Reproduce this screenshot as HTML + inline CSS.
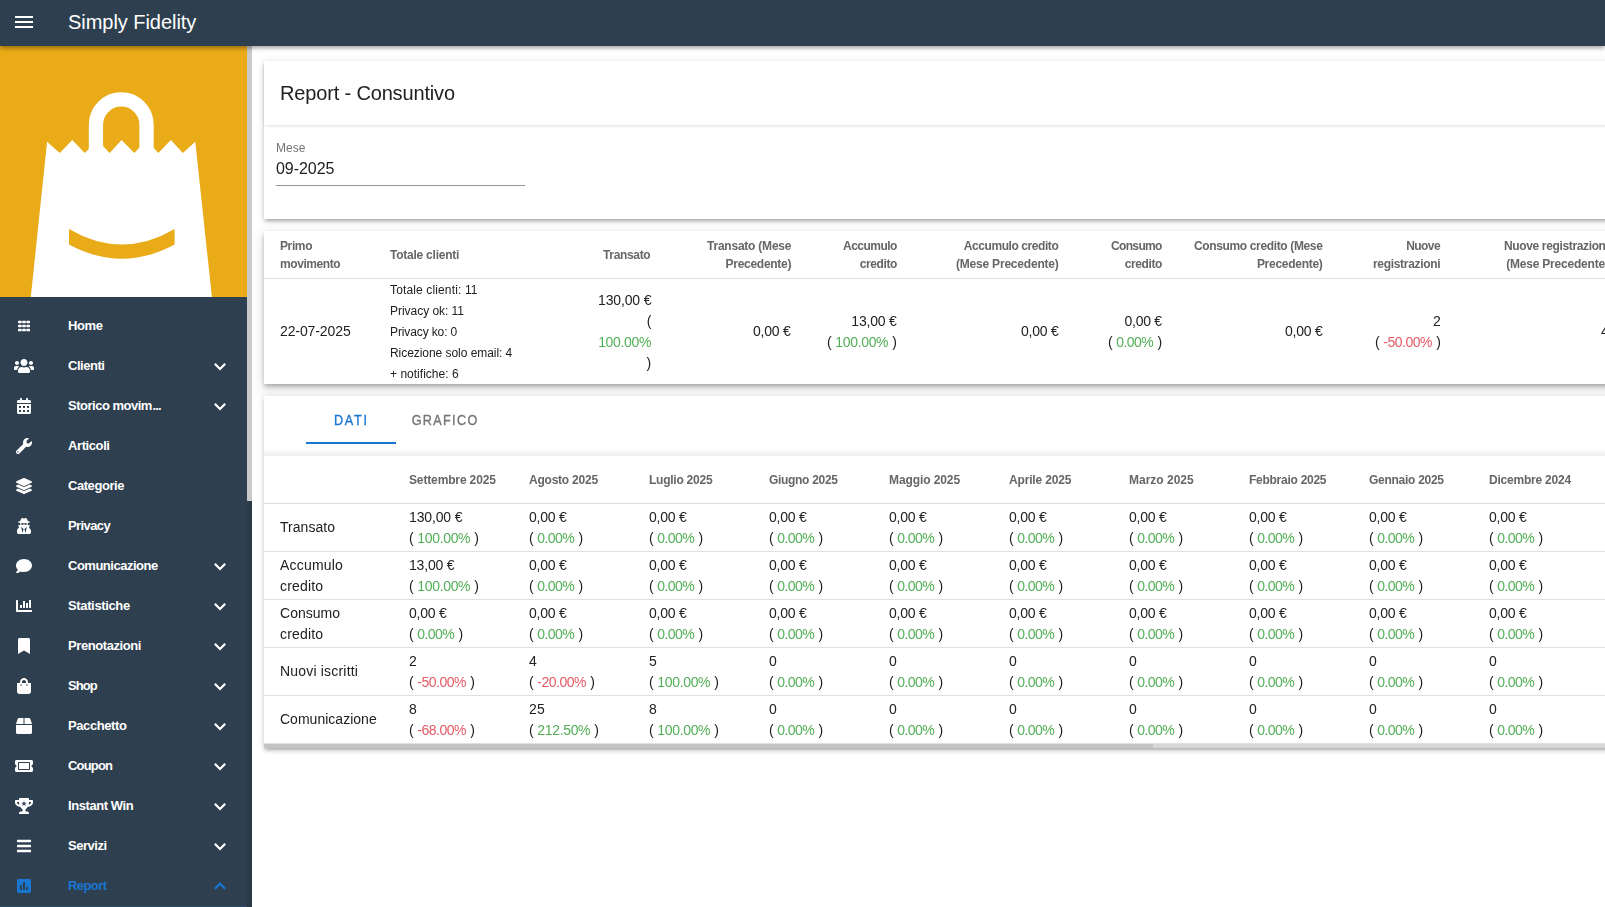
<!DOCTYPE html>
<html lang="it"><head><meta charset="utf-8"><title>Simply Fidelity</title>
<style>
*{box-sizing:border-box}
html,body{margin:0;padding:0}
body{width:1605px;height:907px;overflow:hidden;position:relative;background:#fff;font-family:"Liberation Sans",sans-serif;color:#212121;-webkit-font-smoothing:antialiased}
#appbar{position:absolute;left:0;top:0;width:1605px;height:46px;background:#2e3f4f;z-index:10;box-shadow:0 2px 4px -1px rgba(0,0,0,.2),0 3px 4px 0 rgba(0,0,0,.14),0 1px 6px 0 rgba(0,0,0,.1)}
#burger{position:absolute;left:15px;top:16px;width:18px;height:12px}
.brand{position:absolute;left:68px;top:0;line-height:44px;font-size:20px;color:#fff;white-space:nowrap}
#side{position:absolute;left:0;top:46px;width:252px;height:861px;background:#2e3f4f;overflow:hidden}
#logo{position:absolute;left:0;top:0;width:247px;height:251px}
#logo svg{display:block}
#menu{position:absolute;left:0;top:-46px;width:247px}
.mi{position:absolute;left:0;width:247px;height:40px;color:#fff}
.mi.act{color:#1976d2}
.mi .ic{position:absolute;left:0;top:0;width:48px;height:40px;display:flex;align-items:center;justify-content:center}
.mi .ic svg{height:16px;width:auto;display:block}
.mt{position:absolute;left:68px;top:0;line-height:40px;font-size:13px;font-weight:bold;white-space:nowrap}
.chev{position:absolute;left:214px;top:17px;width:12px;height:8px}
.act .chev{top:16px}
#sbthumb{position:absolute;left:247px;top:0;width:5px;height:455px;background:#c9c9c9}
#main{position:absolute;left:252px;top:46px;width:1353px;height:861px;overflow:hidden}
.card{position:absolute;left:12px;width:1400px;background:#fff;box-shadow:0 3px 3px -2px rgba(0,0,0,.2),0 3px 4px 0 rgba(0,0,0,.14),0 1px 8px 0 rgba(0,0,0,.12)}
#c1{top:15px;height:158px}
#c1t{position:absolute;left:0;top:0;width:100%;height:64px;box-shadow:0 2px 4px -1px rgba(0,0,0,.08),0 1px 3px 0 rgba(0,0,0,.06)}
.h1{position:absolute;left:16px;top:0;line-height:65px;font-size:20px;white-space:nowrap;color:#212121}
#c1b{position:absolute;left:0;top:63px;width:100%;height:95px}
.lbl{position:absolute;left:12px;top:17px;font-size:12px;line-height:14px;color:#757575}
.inp{position:absolute;left:12px;top:35px;font-size:16px;line-height:20px;color:#212121}
#uline{position:absolute;left:12px;top:61px;width:249px;height:1px;background:#949494}
#c2{top:185px;height:153px;box-shadow:0 2px 4px -1px rgba(0,0,0,.2),0 4px 5px 0 rgba(0,0,0,.12),0 1px 8px 0 rgba(0,0,0,.1),0 8px 12px 4px rgba(0,0,0,.06)}
#c2h{position:absolute;left:0;top:0;width:100%;height:48px;border-bottom:1px solid #dedede}
.hc{position:absolute;top:0;height:47px;display:flex;align-items:center;font-size:12px;font-weight:bold;color:#666;line-height:18px;white-space:nowrap}
.hc.r{text-align:right}
#c2b{position:absolute;left:0;top:48px;width:100%;height:105px}
#c2b .bc{padding-top:1px}
#c2b .bc.one{padding-top:0}
.bc{position:absolute;top:0;height:100%;display:flex;align-items:center;font-size:14px;line-height:21px;color:#212121;white-space:nowrap}
.bc.r{text-align:right}
.bc.sm{font-size:12px}
.g{color:#52ae56}
.rd{color:#e45a65}
#c3{top:350px;height:352px}
#c4{top:410px;height:292px;box-shadow:none}
#tgrad{position:absolute;left:0;top:50px;width:100%;height:10px;background:linear-gradient(to bottom,rgba(0,0,0,0),rgba(0,0,0,.02) 40%,rgba(0,0,0,.065))}
#tabs{position:absolute;left:0;top:1px;width:100%;height:48px}
.tab{position:absolute;top:-1px;width:90px;height:48px;line-height:48px;text-align:center;font-size:14px;font-weight:normal;-webkit-text-stroke:.35px currentColor;letter-spacing:1.25px;color:#757575}
.tab.on{color:#1976d2}
#tabline{position:absolute;left:42px;top:45px;width:90px;height:2px;background:#1976d2}
#c3h{position:absolute;left:0;top:0;width:100%;height:48px;border-bottom:1px solid #dedede}
.row{position:absolute;left:0;width:100%;height:48px;border-bottom:1px solid #e0e0e0}
#htrack{position:absolute;left:0;top:288px;width:100%;height:4px;background:#d7d7d7}
#hscroll{position:absolute;left:0;top:0;width:889px;height:4px;background:#c4c4c4}

.td,.tds,.th,.mt,.tb,.h1,.brand,.lbl,.inp{white-space:pre}
#sbtrack{position:absolute;left:247px;top:0;width:5px;height:861px;background:#2a3a48}
#sbbot{position:absolute;left:0;top:860px;width:247px;height:1px;background:#2c4a68}
.bc,.hc,.tab,.h1,.lbl,.inp{will-change:transform}
.mtw{position:absolute;left:68px;top:0;white-space:nowrap}
.mtw .mt{position:static}
.tb{display:inline-block;transform:scaleX(.9);transform-origin:50% 50%}

</style></head><body>
<div id="appbar"><svg id="burger" viewBox="0 0 18 12"><path d="M0 0h18v2H0zM0 5h18v2H0zM0 10h18v2H0z" fill="#fff"/></svg><span class="brand" style="letter-spacing:-0.042px;margin-right:0.042px">Simply Fidelity</span></div>
<div id="side">
<div id="logo"><svg viewBox="0 0 247 251" width="247" height="251"><rect width="247" height="251" fill="#e9ab17"/><path d="M30.8 251 L47.1 95.8 L59.7 107.1 L72.3 94.1 L84.8 107.1 L97.4 94.1 L109.6 107.1 L121.6 94.1 L134.3 107.1 L146.5 94.1 L158.3 107.1 L170.9 94.1 L182.8 107.1 L195.3 95.8 L211.9 251 Z" fill="#fff"/><path d="M95.95 110 V78.7 a25.3 25.3 0 0 1 50.6 0 V110" fill="none" stroke="#fff" stroke-width="14.3"/><path d="M69 183 Q121.8 214 174.6 183 V198.4 Q121.8 227 69 198.4 Z" fill="#e9ab17"/></svg></div>
<div id="menu">
<div class="mi" style="top:306px">
<span class="ic"><svg viewBox="0 0 512 512" style="width:12px;height:12px" fill="currentColor"><rect x="0" y="34" width="156" height="108" rx="20"/><rect x="178" y="34" width="156" height="108" rx="20"/><rect x="356" y="34" width="156" height="108" rx="20"/><rect x="0" y="205" width="156" height="108" rx="20"/><rect x="178" y="205" width="156" height="108" rx="20"/><rect x="356" y="205" width="156" height="108" rx="20"/><rect x="0" y="376" width="156" height="108" rx="20"/><rect x="178" y="376" width="156" height="108" rx="20"/><rect x="356" y="376" width="156" height="108" rx="20"/></svg></span>
<span class="mt" style="letter-spacing:-0.41px;margin-right:0.41px">Home</span>
</div>
<div class="mi" style="top:346px">
<span class="ic"><svg viewBox="0 0 640 512" ><path fill="currentColor" d="M96 224c35.300 0 64-28.700 64-64s-28.700-64-64-64-64 28.700-64 64 28.700 64 64 64zm448 0c35.300 0 64-28.700 64-64s-28.700-64-64-64-64 28.700-64 64 28.700 64 64 64zm32 32h-64c-17.600 0-33.500 7.100-45.100 18.600 40.300 22.100 68.900 62 75.100 109.400h66c17.700 0 32-14.300 32-32v-32c0-35.300-28.700-64-64-64zm-256 0c61.900 0 112-50.100 112-112S381.900 32 320 32 208 82.100 208 144s50.100 112 112 112zm76.800 32h-8.300c-20.800 10-43.900 16-68.500 16s-47.600-6-68.500-16h-8.300C179.600 288 128 339.600 128 403.200V432c0 26.500 21.500 48 48 48h288c26.500 0 48-21.500 48-48v-28.800c0-63.600-51.600-115.200-115.200-115.200zm-223.700-13.400C161.500 263.100 145.600 256 128 256H64c-35.300 0-64 28.700-64 64v32c0 17.700 14.300 32 32 32h65.900c6.300-47.400 34.900-87.300 75.200-109.400z"/></svg></span>
<span class="mt" style="letter-spacing:-0.461px;margin-right:0.461px">Clienti</span>
<svg class="chev" viewBox="0 0 12 8"><path d="M1.6 0 6 4.4 10.4 0 12 1.6 6 7.6 0 1.6z" fill="currentColor"/></svg>
</div>
<div class="mi" style="top:386px">
<span class="ic"><svg viewBox="0 0 448 512" ><path fill="currentColor" d="M0 464c0 26.500 21.500 48 48 48h352c26.500 0 48-21.500 48-48V192H0v272zm320-196c0-6.600 5.400-12 12-12h40c6.600 0 12 5.400 12 12v40c0 6.600-5.400 12-12 12h-40c-6.600 0-12-5.400-12-12v-40zm0 128c0-6.600 5.400-12 12-12h40c6.600 0 12 5.400 12 12v40c0 6.600-5.400 12-12 12h-40c-6.600 0-12-5.400-12-12v-40zM192 268c0-6.600 5.400-12 12-12h40c6.600 0 12 5.400 12 12v40c0 6.600-5.400 12-12 12h-40c-6.600 0-12-5.400-12-12v-40zm0 128c0-6.600 5.400-12 12-12h40c6.600 0 12 5.400 12 12v40c0 6.600-5.400 12-12 12h-40c-6.600 0-12-5.400-12-12v-40zM64 268c0-6.600 5.400-12 12-12h40c6.600 0 12 5.400 12 12v40c0 6.600-5.400 12-12 12H76c-6.600 0-12-5.400-12-12v-40zm0 128c0-6.600 5.400-12 12-12h40c6.600 0 12 5.400 12 12v40c0 6.600-5.400 12-12 12H76c-6.600 0-12-5.400-12-12v-40zM400 64h-48V16c0-8.800-7.200-16-16-16h-32c-8.800 0-16 7.200-16 16v48H160V16c0-8.800-7.200-16-16-16h-32c-8.800 0-16 7.200-16 16v48H48C21.500 64 0 85.500 0 112v48h448v-48c0-26.500-21.500-48-48-48z"/></svg></span>
<span class="mtw"><span class="mt" style="letter-spacing:-0.49px;margin-right:0.49px">Storico movim</span><span class="mt" style="letter-spacing:-0.812px;margin-right:0.812px">...</span></span>
<svg class="chev" viewBox="0 0 12 8"><path d="M1.6 0 6 4.4 10.4 0 12 1.6 6 7.6 0 1.6z" fill="currentColor"/></svg>
</div>
<div class="mi" style="top:426px">
<span class="ic"><svg viewBox="0 0 512 512" ><path fill="currentColor" d="M507.730 109.100c-2.240-9.030-13.540-12.090-20.120-5.510l-74.360 74.360-67.880-11.310-11.310-67.880 74.360-74.360c6.620-6.620 3.430-17.900-5.660-20.160-47.380-11.740-99.550.91-136.580 37.930-39.640 39.640-50.550 97.100-34.050 147.200L18.740 402.760c-24.990 24.990-24.990 65.510 0 90.500 24.990 24.990 65.510 24.990 90.500 0l213.210-213.210c50.120 16.710 107.470 5.680 147.370-34.220 37.070-37.070 49.700-89.320 37.910-136.730zM64 472c-13.250 0-24-10.750-24-24 0-13.260 10.750-24 24-24s24 10.740 24 24c0 13.250-10.750 24-24 24z"/></svg></span>
<span class="mt" style="letter-spacing:-0.404px;margin-right:0.404px">Articoli</span>
</div>
<div class="mi" style="top:466px">
<span class="ic"><svg viewBox="0 0 512 512" ><path fill="currentColor" d="M12.410 148.020l232.940 105.670c6.800 3.090 14.490 3.090 21.290 0l232.940-105.670c16.550-7.510 16.550-32.520 0-40.030L266.650 2.310a25.607 25.607 0 0 0-21.290 0L12.410 107.980c-16.550 7.510-16.550 32.530 0 40.040zm487.180 88.280l-58.090-26.330-161.640 73.270c-7.560 3.430-15.590 5.170-23.860 5.170s-16.290-1.740-23.860-5.170L70.510 209.970l-58.100 26.330c-16.550 7.500-16.550 32.500 0 40l232.940 105.590c6.800 3.080 14.490 3.080 21.290 0L499.590 276.300c16.550-7.500 16.550-32.500 0-40zm0 127.800l-57.870-26.230-161.860 73.370c-7.560 3.430-15.590 5.170-23.860 5.170s-16.290-1.740-23.860-5.170L70.290 337.870 12.410 364.100c-16.550 7.500-16.550 32.500 0 40l232.940 105.590c6.800 3.080 14.490 3.080 21.290 0L499.590 404.100c16.550-7.500 16.550-32.500 0-40z"/></svg></span>
<span class="mt" style="letter-spacing:-0.445px;margin-right:0.445px">Categorie</span>
</div>
<div class="mi" style="top:506px">
<span class="ic"><svg viewBox="0 0 448 512" ><path fill="currentColor" d="M383.900 308.300l23.900-62.600c4-10.500-3.700-21.700-15-21.700h-58.500c11-18.900 17.800-40.600 17.800-64v-.3c39.200-7.800 64-19.100 64-31.700 0-13.300-27.300-25.100-70.100-33-9.200-32.800-27-65.800-40.600-82.800-9.500-11.900-25.900-15.600-39.500-8.800l-27.600 13.800c-9 4.500-19.600 4.500-28.600 0L182.100 3.400c-13.600-6.800-30-3.100-39.500 8.800-13.500 17-31.400 50-40.600 82.800-42.700 7.900-70 19.700-70 33 0 12.600 24.800 23.900 64 31.700v.3c0 23.400 6.800 45.100 17.800 64H56.300c-11.500 0-19.200 11.700-14.700 22.300l25.800 60.200C27.300 329.800 0 372.700 0 422.400v44.800C0 491.900 20.100 512 44.800 512h358.400c24.700 0 44.800-20.100 44.800-44.800v-44.800c0-48.400-25.800-90.400-64.100-114.100zM176 480l-41.600-192 49.600 32 24 40-32 120zm96 0l-32-120 24-40 49.600-32L272 480zm41.700-298.500c-3.900 11.900-7 24.600-16.500 33.400-10.100 9.300-48 22.400-64-25-2.800-8.400-15.400-8.400-18.300 0-17 50.200-56 32.400-64 25-9.500-8.800-12.700-21.500-16.500-33.400-.8-2.500-6.300-5.700-6.300-5.800v-10.800c28.300 3.600 61 5.800 96 5.800s67.700-2.100 96-5.800v10.800c-.1.100-5.600 3.200-6.400 5.800z"/></svg></span>
<span class="mt" style="letter-spacing:-0.59px;margin-right:0.59px">Privacy</span>
</div>
<div class="mi" style="top:546px">
<span class="ic"><svg viewBox="0 0 512 512" ><path fill="currentColor" d="M256 32C114.600 32 0 125.100 0 240c0 49.600 21.400 95 57 130.700C44.500 421.100 2.700 466 2.200 466.500c-2.200 2.300-2.800 5.700-1.500 8.700S4.800 480 8 480c66.300 0 116-31.800 140.600-51.400 32.700 12.300 69 19.400 107.400 19.400 141.400 0 256-93.100 256-208S397.400 32 256 32z"/></svg></span>
<span class="mt" style="letter-spacing:-0.49px;margin-right:0.49px">Comunicazione</span>
<svg class="chev" viewBox="0 0 12 8"><path d="M1.6 0 6 4.4 10.4 0 12 1.6 6 7.6 0 1.6z" fill="currentColor"/></svg>
</div>
<div class="mi" style="top:586px">
<span class="ic"><svg viewBox="0 0 512 512" ><path fill="currentColor" d="M332.800 320h38.400c6.400 0 12.800-6.400 12.800-12.800V172.800c0-6.400-6.400-12.800-12.800-12.800h-38.400c-6.400 0-12.800 6.400-12.800 12.800v134.400c0 6.400 6.400 12.800 12.800 12.800zm96 0h38.400c6.400 0 12.800-6.400 12.800-12.800V76.800c0-6.400-6.400-12.800-12.800-12.800h-38.400c-6.400 0-12.800 6.400-12.800 12.800v230.400c0 6.400 6.400 12.800 12.800 12.800zm-288 0h38.400c6.400 0 12.800-6.400 12.800-12.800v-70.400c0-6.400-6.400-12.800-12.800-12.800h-38.400c-6.400 0-12.800 6.400-12.800 12.800v70.400c0 6.400 6.400 12.800 12.800 12.800zm96 0h38.400c6.400 0 12.800-6.400 12.800-12.800V108.800c0-6.400-6.400-12.800-12.800-12.800h-38.400c-6.400 0-12.800 6.400-12.800 12.800v198.400c0 6.400 6.400 12.800 12.800 12.800zM496 384H64V80c0-8.840-7.160-16-16-16H16C7.160 64 0 71.160 0 80v336c0 17.670 14.330 32 32 32h464c8.840 0 16-7.160 16-16v-32c0-8.840-7.160-16-16-16z"/></svg></span>
<span class="mt" style="letter-spacing:-0.359px;margin-right:0.359px">Statistiche</span>
<svg class="chev" viewBox="0 0 12 8"><path d="M1.6 0 6 4.4 10.4 0 12 1.6 6 7.6 0 1.6z" fill="currentColor"/></svg>
</div>
<div class="mi" style="top:626px">
<span class="ic"><svg viewBox="0 0 384 512" ><path fill="currentColor" d="M0 512V48C0 21.490 21.490 0 48 0h288c26.510 0 48 21.490 48 48v464L192 400 0 512z"/></svg></span>
<span class="mt" style="letter-spacing:-0.413px;margin-right:0.413px">Prenotazioni</span>
<svg class="chev" viewBox="0 0 12 8"><path d="M1.6 0 6 4.4 10.4 0 12 1.6 6 7.6 0 1.6z" fill="currentColor"/></svg>
</div>
<div class="mi" style="top:666px">
<span class="ic"><svg viewBox="0 0 448 512" ><path fill="currentColor" d="M352 160v-32C352 57.420 294.579 0 224 0 153.420 0 96 57.420 96 128v32H0v272c0 44.183 35.817 80 80 80h288c44.183 0 80-35.817 80-80V160h-96zm-192-32c0-35.290 28.710-64 64-64s64 28.710 64 64v32H160v-32zm160 120c-13.255 0-24-10.745-24-24s10.745-24 24-24 24 10.745 24 24-10.745 24-24 24zm-192 0c-13.255 0-24-10.745-24-24s10.745-24 24-24 24 10.745 24 24-10.745 24-24 24z"/></svg></span>
<span class="mt" style="letter-spacing:-0.906px;margin-right:0.906px">Shop</span>
<svg class="chev" viewBox="0 0 12 8"><path d="M1.6 0 6 4.4 10.4 0 12 1.6 6 7.6 0 1.6z" fill="currentColor"/></svg>
</div>
<div class="mi" style="top:706px">
<span class="ic"><svg viewBox="0 0 512 512" ><path fill="currentColor" d="M509.500 184.600L458.900 32.800C452.400 13.200 434.100 0 413.400 0H272v192h238.700c-.4-2.500-.4-5-1.200-7.400zM240 0H98.600c-20.700 0-39 13.200-45.500 32.800L2.500 184.600c-.8 2.400-.8 4.900-1.200 7.400H240V0zM0 224v240c0 26.500 21.500 48 48 48h416c26.500 0 48-21.500 48-48V224H0z"/></svg></span>
<span class="mt" style="letter-spacing:-0.406px;margin-right:0.406px">Pacchetto</span>
<svg class="chev" viewBox="0 0 12 8"><path d="M1.6 0 6 4.4 10.4 0 12 1.6 6 7.6 0 1.6z" fill="currentColor"/></svg>
</div>
<div class="mi" style="top:746px">
<span class="ic"><svg viewBox="0 0 576 512" ><path fill="currentColor" d="M128 160h320v192H128V160zm400 96c0 26.510 21.490 48 48 48v96c0 26.510-21.490 48-48 48H48c-26.510 0-48-21.490-48-48v-96c26.510 0 48-21.490 48-48s-21.490-48-48-48v-96c0-26.510 21.490-48 48-48h480c26.510 0 48 21.490 48 48v96c-26.510 0-48 21.490-48 48zm-48-104c0-13.255-10.745-24-24-24H120c-13.255 0-24 10.745-24 24v208c0 13.255 10.745 24 24 24h336c13.255 0 24-10.745 24-24V152z"/></svg></span>
<span class="mt" style="letter-spacing:-0.818px;margin-right:0.818px">Coupon</span>
<svg class="chev" viewBox="0 0 12 8"><path d="M1.6 0 6 4.4 10.4 0 12 1.6 6 7.6 0 1.6z" fill="currentColor"/></svg>
</div>
<div class="mi" style="top:786px">
<span class="ic"><svg viewBox="0 0 576 512" fill-rule="evenodd"><path fill="currentColor" d="M552 64H448V24c0-13.300-10.700-24-24-24H152c-13.300 0-24 10.700-24 24v40H24C10.700 64 0 74.700 0 88v56c0 35.700 22.500 72.400 61.900 100.700 31.500 22.700 69.800 37.100 110 41.700C203.300 338.500 240 360 240 360v72h-48c-35.300 0-64 20.700-64 56v12c0 6.600 5.400 12 12 12h296c6.600 0 12-5.400 12-12v-12c0-35.300-28.700-56-64-56h-48v-72s36.700-21.500 68.100-73.600c40.300-4.600 78.600-19 110-41.700 39.300-28.300 61.900-65 61.900-100.700V88c0-13.300-10.700-24-24-24zM99.300 192.800C74.900 175.200 64 155.600 64 144v-16h64.200c1 32.600 5.800 61.200 12.800 86.200-15.100-5.200-29.200-12.400-41.700-21.400zM512 144c0 16.100-17.700 36.100-35.300 48.800-12.500 9-26.700 16.200-41.800 21.400 7-25 11.800-53.600 12.800-86.200H512v16z M288.0 90.0 L309.7 152.1 L375.5 153.6 L323.2 193.4 L342.1 256.4 L288.0 219.0 L233.9 256.4 L252.8 193.4 L200.5 153.6 L266.3 152.1z"/></svg></span>
<span class="mt" style="letter-spacing:-0.419px;margin-right:0.419px">Instant Win</span>
<svg class="chev" viewBox="0 0 12 8"><path d="M1.6 0 6 4.4 10.4 0 12 1.6 6 7.6 0 1.6z" fill="currentColor"/></svg>
</div>
<div class="mi" style="top:826px">
<span class="ic"><svg viewBox="0 0 448 512" fill="currentColor"><rect x="0" y="54" width="448" height="84" rx="16"/><rect x="0" y="214" width="448" height="84" rx="16"/><rect x="0" y="374" width="448" height="84" rx="16"/></svg></span>
<span class="mt" style="letter-spacing:-0.457px;margin-right:0.457px">Servizi</span>
<svg class="chev" viewBox="0 0 12 8"><path d="M1.6 0 6 4.4 10.4 0 12 1.6 6 7.6 0 1.6z" fill="currentColor"/></svg>
</div>
<div class="mi act" style="top:866px">
<span class="ic"><svg viewBox="0 0 448 512" ><path fill="currentColor" d="M400 32H48C21.500 32 0 53.500 0 80v352c0 26.500 21.500 48 48 48h352c26.500 0 48-21.500 48-48V80c0-26.500-21.500-48-48-48zM160 368c0 8.840-7.160 16-16 16h-32c-8.840 0-16-7.160-16-16V240c0-8.840 7.160-16 16-16h32c8.840 0 16 7.160 16 16v128zm96 0c0 8.840-7.160 16-16 16h-32c-8.840 0-16-7.160-16-16V144c0-8.840 7.160-16 16-16h32c8.840 0 16 7.160 16 16v224zm96 0c0 8.840-7.160 16-16 16h-32c-8.840 0-16-7.160-16-16v-64c0-8.840 7.160-16 16-16h32c8.840 0 16 7.160 16 16v64z"/></svg></span>
<span class="mt" style="letter-spacing:-0.562px;margin-right:0.562px">Report</span>
<svg class="chev" viewBox="0 0 12 8"><path d="M1.6 7.6 6 3.2l4.4 4.4L12 6 6 0 0 6z" fill="currentColor"/></svg>
</div>
</div>
<div id="sbtrack"></div><div id="sbthumb"></div><div id="sbbot"></div>
</div>
<div id="main">
<div class="card" id="c1"><div id="c1t"><span class="h1" style="letter-spacing:-0.157px;margin-right:0.157px">Report - Consuntivo</span></div>
<div id="c1b"><span class="lbl" style="letter-spacing:0.019px;margin-right:-0.019px">Mese</span><span class="inp" style="letter-spacing:-0.058px;margin-right:0.058px">09-2025</span><div id="uline"></div></div></div>
<div class="card" id="c2">
<div id="c2h">
<div class="hc" style="left:16px"><div><span class="th" style="letter-spacing:-0.383px;margin-right:0.383px">Primo</span><br><span class="th" style="letter-spacing:-0.424px;margin-right:0.424px">movimento</span></div></div>
<div class="hc" style="left:126px"><div><span class="th" style="letter-spacing:-0.238px;margin-right:0.238px">Totale clienti</span></div></div>
<div class="hc r" style="right:1013px"><div><span class="th" style="letter-spacing:-0.337px;margin-right:0.337px">Transato</span></div></div>
<div class="hc r" style="right:873px"><div><span class="th" style="letter-spacing:-0.223px;margin-right:0.223px">Transato (Mese</span><br><span class="th" style="letter-spacing:-0.275px;margin-right:0.275px">Precedente)</span></div></div>
<div class="hc r" style="right:767px"><div><span class="th" style="letter-spacing:-0.522px;margin-right:0.522px">Accumulo</span><br><span class="th" style="letter-spacing:-0.398px;margin-right:0.398px">credito</span></div></div>
<div class="hc r" style="right:605px"><div><span class="th" style="letter-spacing:-0.426px;margin-right:0.426px">Accumulo credito</span><br><span class="th" style="letter-spacing:-0.205px;margin-right:0.205px">(Mese Precedente)</span></div></div>
<div class="hc r" style="right:502px"><div><span class="th" style="letter-spacing:-0.656px;margin-right:0.656px">Consumo</span><br><span class="th" style="letter-spacing:-0.398px;margin-right:0.398px">credito</span></div></div>
<div class="hc r" style="right:341px"><div><span class="th" style="letter-spacing:-0.36px;margin-right:0.36px">Consumo credito (Mese</span><br><span class="th" style="letter-spacing:-0.275px;margin-right:0.275px">Precedente)</span></div></div>
<div class="hc r" style="right:223px"><div><span class="th" style="letter-spacing:-0.579px;margin-right:0.579px">Nuove</span><br><span class="th" style="letter-spacing:-0.312px;margin-right:0.312px">registrazioni</span></div></div>
<div class="hc r" style="right:55px"><div><span class="th" style="letter-spacing:-0.357px;margin-right:0.357px">Nuove registrazioni</span><br><span class="th" style="letter-spacing:-0.205px;margin-right:0.205px">(Mese Precedente)</span></div></div>
</div>
<div id="c2b">
<div class="bc one" style="left:16px"><div><span class="td" style="letter-spacing:-0.104px;margin-right:0.104px">22-07-2025</span></div></div>
<div class="bc sm" style="left:126px"><div><span class="tds" style="letter-spacing:0.136px;margin-right:-0.136px">Totale clienti: 11</span><br><span class="tds" style="letter-spacing:-0.033px;margin-right:0.033px">Privacy ok: 11</span><br><span class="tds" style="letter-spacing:-0.117px;margin-right:0.117px">Privacy ko: 0</span><br><span class="tds" style="letter-spacing:-0.05px;margin-right:0.05px">Ricezione solo email: 4</span><br><span class="tds" style="letter-spacing:0.019px;margin-right:-0.019px">+ notifiche: 6</span></div></div>
<div class="bc r" style="right:1013px"><div><span class="td" style="letter-spacing:-0.152px;margin-right:0.152px">130,00 €</span><br><span class="td" style="letter-spacing:0.0px;margin-right:0.125px">(</span><br><span class="g"><span class="td" style="letter-spacing:-0.329px;margin-right:0.329px">100.00%</span></span><br><span class="td" style="letter-spacing:0.0px;margin-right:0.203px">)</span></div></div>
<div class="bc r one" style="right:873px"><div><span class="td" style="letter-spacing:-0.245px;margin-right:0.245px">0,00 €</span></div></div>
<div class="bc r" style="right:767px"><div><span class="td" style="letter-spacing:-0.19px;margin-right:0.19px">13,00 €</span><br><span class="td" style="letter-spacing:-0.297px;margin-right:0.297px">( </span><span class="g"><span class="td" style="letter-spacing:-0.329px;margin-right:0.329px">100.00%</span></span><span class="td" style="letter-spacing:-0.203px;margin-right:0.203px"> )</span></div></div>
<div class="bc r one" style="right:605px"><div><span class="td" style="letter-spacing:-0.245px;margin-right:0.245px">0,00 €</span></div></div>
<div class="bc r" style="right:502px"><div><span class="td" style="letter-spacing:-0.245px;margin-right:0.245px">0,00 €</span><br><span class="td" style="letter-spacing:-0.297px;margin-right:0.297px">( </span><span class="g"><span class="td" style="letter-spacing:-0.537px;margin-right:0.537px">0.00%</span></span><span class="td" style="letter-spacing:-0.203px;margin-right:0.203px"> )</span></div></div>
<div class="bc r one" style="right:341px"><div><span class="td" style="letter-spacing:-0.245px;margin-right:0.245px">0,00 €</span></div></div>
<div class="bc r" style="right:223px"><div><span class="td" style="letter-spacing:0.0px;margin-right:0.078px">2</span><br><span class="td" style="letter-spacing:-0.297px;margin-right:0.297px">( </span><span class="rd"><span class="td" style="letter-spacing:-0.477px;margin-right:0.477px">-50.00%</span></span><span class="td" style="letter-spacing:-0.203px;margin-right:0.203px"> )</span></div></div>
<div class="bc r one" style="right:55px"><div><span class="td" style="letter-spacing:0.0px;margin-right:0.078px">4</span></div></div>
</div></div>
<div class="card" id="c3">
<div id="tabs"><div class="tab on" style="left:42px"><span class="tb" style="letter-spacing:1.987px">DATI</span></div><div class="tab" style="left:132px;width:98px"><span class="tb" style="letter-spacing:1.498px">GRAFICO</span></div><div id="tabline"></div></div><div id="tgrad"></div>
</div>
<div class="card" id="c4">
<div id="c3h">
<div class="hc" style="left:145px"><div><span class="th" style="letter-spacing:-0.14px;margin-right:0.14px">Settembre 2025</span></div></div>
<div class="hc" style="left:265px"><div><span class="th" style="letter-spacing:-0.23px;margin-right:0.23px">Agosto 2025</span></div></div>
<div class="hc" style="left:385px"><div><span class="th" style="letter-spacing:-0.245px;margin-right:0.245px">Luglio 2025</span></div></div>
<div class="hc" style="left:505px"><div><span class="th" style="letter-spacing:-0.308px;margin-right:0.308px">Giugno 2025</span></div></div>
<div class="hc" style="left:625px"><div><span class="th" style="letter-spacing:-0.092px;margin-right:0.092px">Maggio 2025</span></div></div>
<div class="hc" style="left:745px"><div><span class="th" style="letter-spacing:-0.167px;margin-right:0.167px">Aprile 2025</span></div></div>
<div class="hc" style="left:865px"><div><span class="th" style="letter-spacing:-0.007px;margin-right:0.007px">Marzo 2025</span></div></div>
<div class="hc" style="left:985px"><div><span class="th" style="letter-spacing:-0.264px;margin-right:0.264px">Febbraio 2025</span></div></div>
<div class="hc" style="left:1105px"><div><span class="th" style="letter-spacing:-0.276px;margin-right:0.276px">Gennaio 2025</span></div></div>
<div class="hc" style="left:1225px"><div><span class="th" style="letter-spacing:-0.216px;margin-right:0.216px">Dicembre 2024</span></div></div>
</div>
<div class="row" style="top:48px">
<div class="bc" style="left:16px"><div><span class="td" style="letter-spacing:0.029px;margin-right:-0.029px">Transato</span></div></div>
<div class="bc" style="left:145px"><div><span class="td" style="letter-spacing:-0.152px;margin-right:0.152px">130,00 €</span><br><span class="td" style="letter-spacing:-0.297px;margin-right:0.297px">( </span><span class="g"><span class="td" style="letter-spacing:-0.329px;margin-right:0.329px">100.00%</span></span><span class="td" style="letter-spacing:-0.203px;margin-right:0.203px"> )</span></div></div>
<div class="bc" style="left:265px"><div><span class="td" style="letter-spacing:-0.245px;margin-right:0.245px">0,00 €</span><br><span class="td" style="letter-spacing:-0.297px;margin-right:0.297px">( </span><span class="g"><span class="td" style="letter-spacing:-0.537px;margin-right:0.537px">0.00%</span></span><span class="td" style="letter-spacing:-0.203px;margin-right:0.203px"> )</span></div></div>
<div class="bc" style="left:385px"><div><span class="td" style="letter-spacing:-0.245px;margin-right:0.245px">0,00 €</span><br><span class="td" style="letter-spacing:-0.297px;margin-right:0.297px">( </span><span class="g"><span class="td" style="letter-spacing:-0.537px;margin-right:0.537px">0.00%</span></span><span class="td" style="letter-spacing:-0.203px;margin-right:0.203px"> )</span></div></div>
<div class="bc" style="left:505px"><div><span class="td" style="letter-spacing:-0.245px;margin-right:0.245px">0,00 €</span><br><span class="td" style="letter-spacing:-0.297px;margin-right:0.297px">( </span><span class="g"><span class="td" style="letter-spacing:-0.537px;margin-right:0.537px">0.00%</span></span><span class="td" style="letter-spacing:-0.203px;margin-right:0.203px"> )</span></div></div>
<div class="bc" style="left:625px"><div><span class="td" style="letter-spacing:-0.245px;margin-right:0.245px">0,00 €</span><br><span class="td" style="letter-spacing:-0.297px;margin-right:0.297px">( </span><span class="g"><span class="td" style="letter-spacing:-0.537px;margin-right:0.537px">0.00%</span></span><span class="td" style="letter-spacing:-0.203px;margin-right:0.203px"> )</span></div></div>
<div class="bc" style="left:745px"><div><span class="td" style="letter-spacing:-0.245px;margin-right:0.245px">0,00 €</span><br><span class="td" style="letter-spacing:-0.297px;margin-right:0.297px">( </span><span class="g"><span class="td" style="letter-spacing:-0.537px;margin-right:0.537px">0.00%</span></span><span class="td" style="letter-spacing:-0.203px;margin-right:0.203px"> )</span></div></div>
<div class="bc" style="left:865px"><div><span class="td" style="letter-spacing:-0.245px;margin-right:0.245px">0,00 €</span><br><span class="td" style="letter-spacing:-0.297px;margin-right:0.297px">( </span><span class="g"><span class="td" style="letter-spacing:-0.537px;margin-right:0.537px">0.00%</span></span><span class="td" style="letter-spacing:-0.203px;margin-right:0.203px"> )</span></div></div>
<div class="bc" style="left:985px"><div><span class="td" style="letter-spacing:-0.245px;margin-right:0.245px">0,00 €</span><br><span class="td" style="letter-spacing:-0.297px;margin-right:0.297px">( </span><span class="g"><span class="td" style="letter-spacing:-0.537px;margin-right:0.537px">0.00%</span></span><span class="td" style="letter-spacing:-0.203px;margin-right:0.203px"> )</span></div></div>
<div class="bc" style="left:1105px"><div><span class="td" style="letter-spacing:-0.245px;margin-right:0.245px">0,00 €</span><br><span class="td" style="letter-spacing:-0.297px;margin-right:0.297px">( </span><span class="g"><span class="td" style="letter-spacing:-0.537px;margin-right:0.537px">0.00%</span></span><span class="td" style="letter-spacing:-0.203px;margin-right:0.203px"> )</span></div></div>
<div class="bc" style="left:1225px"><div><span class="td" style="letter-spacing:-0.245px;margin-right:0.245px">0,00 €</span><br><span class="td" style="letter-spacing:-0.297px;margin-right:0.297px">( </span><span class="g"><span class="td" style="letter-spacing:-0.537px;margin-right:0.537px">0.00%</span></span><span class="td" style="letter-spacing:-0.203px;margin-right:0.203px"> )</span></div></div>
</div>
<div class="row" style="top:96px">
<div class="bc" style="left:16px"><div><span class="td" style="letter-spacing:0.203px;margin-right:-0.203px">Accumulo</span><br><span class="td" style="letter-spacing:0.176px;margin-right:-0.176px">credito</span></div></div>
<div class="bc" style="left:145px"><div><span class="td" style="letter-spacing:-0.19px;margin-right:0.19px">13,00 €</span><br><span class="td" style="letter-spacing:-0.297px;margin-right:0.297px">( </span><span class="g"><span class="td" style="letter-spacing:-0.329px;margin-right:0.329px">100.00%</span></span><span class="td" style="letter-spacing:-0.203px;margin-right:0.203px"> )</span></div></div>
<div class="bc" style="left:265px"><div><span class="td" style="letter-spacing:-0.245px;margin-right:0.245px">0,00 €</span><br><span class="td" style="letter-spacing:-0.297px;margin-right:0.297px">( </span><span class="g"><span class="td" style="letter-spacing:-0.537px;margin-right:0.537px">0.00%</span></span><span class="td" style="letter-spacing:-0.203px;margin-right:0.203px"> )</span></div></div>
<div class="bc" style="left:385px"><div><span class="td" style="letter-spacing:-0.245px;margin-right:0.245px">0,00 €</span><br><span class="td" style="letter-spacing:-0.297px;margin-right:0.297px">( </span><span class="g"><span class="td" style="letter-spacing:-0.537px;margin-right:0.537px">0.00%</span></span><span class="td" style="letter-spacing:-0.203px;margin-right:0.203px"> )</span></div></div>
<div class="bc" style="left:505px"><div><span class="td" style="letter-spacing:-0.245px;margin-right:0.245px">0,00 €</span><br><span class="td" style="letter-spacing:-0.297px;margin-right:0.297px">( </span><span class="g"><span class="td" style="letter-spacing:-0.537px;margin-right:0.537px">0.00%</span></span><span class="td" style="letter-spacing:-0.203px;margin-right:0.203px"> )</span></div></div>
<div class="bc" style="left:625px"><div><span class="td" style="letter-spacing:-0.245px;margin-right:0.245px">0,00 €</span><br><span class="td" style="letter-spacing:-0.297px;margin-right:0.297px">( </span><span class="g"><span class="td" style="letter-spacing:-0.537px;margin-right:0.537px">0.00%</span></span><span class="td" style="letter-spacing:-0.203px;margin-right:0.203px"> )</span></div></div>
<div class="bc" style="left:745px"><div><span class="td" style="letter-spacing:-0.245px;margin-right:0.245px">0,00 €</span><br><span class="td" style="letter-spacing:-0.297px;margin-right:0.297px">( </span><span class="g"><span class="td" style="letter-spacing:-0.537px;margin-right:0.537px">0.00%</span></span><span class="td" style="letter-spacing:-0.203px;margin-right:0.203px"> )</span></div></div>
<div class="bc" style="left:865px"><div><span class="td" style="letter-spacing:-0.245px;margin-right:0.245px">0,00 €</span><br><span class="td" style="letter-spacing:-0.297px;margin-right:0.297px">( </span><span class="g"><span class="td" style="letter-spacing:-0.537px;margin-right:0.537px">0.00%</span></span><span class="td" style="letter-spacing:-0.203px;margin-right:0.203px"> )</span></div></div>
<div class="bc" style="left:985px"><div><span class="td" style="letter-spacing:-0.245px;margin-right:0.245px">0,00 €</span><br><span class="td" style="letter-spacing:-0.297px;margin-right:0.297px">( </span><span class="g"><span class="td" style="letter-spacing:-0.537px;margin-right:0.537px">0.00%</span></span><span class="td" style="letter-spacing:-0.203px;margin-right:0.203px"> )</span></div></div>
<div class="bc" style="left:1105px"><div><span class="td" style="letter-spacing:-0.245px;margin-right:0.245px">0,00 €</span><br><span class="td" style="letter-spacing:-0.297px;margin-right:0.297px">( </span><span class="g"><span class="td" style="letter-spacing:-0.537px;margin-right:0.537px">0.00%</span></span><span class="td" style="letter-spacing:-0.203px;margin-right:0.203px"> )</span></div></div>
<div class="bc" style="left:1225px"><div><span class="td" style="letter-spacing:-0.245px;margin-right:0.245px">0,00 €</span><br><span class="td" style="letter-spacing:-0.297px;margin-right:0.297px">( </span><span class="g"><span class="td" style="letter-spacing:-0.537px;margin-right:0.537px">0.00%</span></span><span class="td" style="letter-spacing:-0.203px;margin-right:0.203px"> )</span></div></div>
</div>
<div class="row" style="top:144px">
<div class="bc" style="left:16px"><div><span class="td" style="letter-spacing:0.02px;margin-right:-0.02px">Consumo</span><br><span class="td" style="letter-spacing:0.176px;margin-right:-0.176px">credito</span></div></div>
<div class="bc" style="left:145px"><div><span class="td" style="letter-spacing:-0.245px;margin-right:0.245px">0,00 €</span><br><span class="td" style="letter-spacing:-0.297px;margin-right:0.297px">( </span><span class="g"><span class="td" style="letter-spacing:-0.537px;margin-right:0.537px">0.00%</span></span><span class="td" style="letter-spacing:-0.203px;margin-right:0.203px"> )</span></div></div>
<div class="bc" style="left:265px"><div><span class="td" style="letter-spacing:-0.245px;margin-right:0.245px">0,00 €</span><br><span class="td" style="letter-spacing:-0.297px;margin-right:0.297px">( </span><span class="g"><span class="td" style="letter-spacing:-0.537px;margin-right:0.537px">0.00%</span></span><span class="td" style="letter-spacing:-0.203px;margin-right:0.203px"> )</span></div></div>
<div class="bc" style="left:385px"><div><span class="td" style="letter-spacing:-0.245px;margin-right:0.245px">0,00 €</span><br><span class="td" style="letter-spacing:-0.297px;margin-right:0.297px">( </span><span class="g"><span class="td" style="letter-spacing:-0.537px;margin-right:0.537px">0.00%</span></span><span class="td" style="letter-spacing:-0.203px;margin-right:0.203px"> )</span></div></div>
<div class="bc" style="left:505px"><div><span class="td" style="letter-spacing:-0.245px;margin-right:0.245px">0,00 €</span><br><span class="td" style="letter-spacing:-0.297px;margin-right:0.297px">( </span><span class="g"><span class="td" style="letter-spacing:-0.537px;margin-right:0.537px">0.00%</span></span><span class="td" style="letter-spacing:-0.203px;margin-right:0.203px"> )</span></div></div>
<div class="bc" style="left:625px"><div><span class="td" style="letter-spacing:-0.245px;margin-right:0.245px">0,00 €</span><br><span class="td" style="letter-spacing:-0.297px;margin-right:0.297px">( </span><span class="g"><span class="td" style="letter-spacing:-0.537px;margin-right:0.537px">0.00%</span></span><span class="td" style="letter-spacing:-0.203px;margin-right:0.203px"> )</span></div></div>
<div class="bc" style="left:745px"><div><span class="td" style="letter-spacing:-0.245px;margin-right:0.245px">0,00 €</span><br><span class="td" style="letter-spacing:-0.297px;margin-right:0.297px">( </span><span class="g"><span class="td" style="letter-spacing:-0.537px;margin-right:0.537px">0.00%</span></span><span class="td" style="letter-spacing:-0.203px;margin-right:0.203px"> )</span></div></div>
<div class="bc" style="left:865px"><div><span class="td" style="letter-spacing:-0.245px;margin-right:0.245px">0,00 €</span><br><span class="td" style="letter-spacing:-0.297px;margin-right:0.297px">( </span><span class="g"><span class="td" style="letter-spacing:-0.537px;margin-right:0.537px">0.00%</span></span><span class="td" style="letter-spacing:-0.203px;margin-right:0.203px"> )</span></div></div>
<div class="bc" style="left:985px"><div><span class="td" style="letter-spacing:-0.245px;margin-right:0.245px">0,00 €</span><br><span class="td" style="letter-spacing:-0.297px;margin-right:0.297px">( </span><span class="g"><span class="td" style="letter-spacing:-0.537px;margin-right:0.537px">0.00%</span></span><span class="td" style="letter-spacing:-0.203px;margin-right:0.203px"> )</span></div></div>
<div class="bc" style="left:1105px"><div><span class="td" style="letter-spacing:-0.245px;margin-right:0.245px">0,00 €</span><br><span class="td" style="letter-spacing:-0.297px;margin-right:0.297px">( </span><span class="g"><span class="td" style="letter-spacing:-0.537px;margin-right:0.537px">0.00%</span></span><span class="td" style="letter-spacing:-0.203px;margin-right:0.203px"> )</span></div></div>
<div class="bc" style="left:1225px"><div><span class="td" style="letter-spacing:-0.245px;margin-right:0.245px">0,00 €</span><br><span class="td" style="letter-spacing:-0.297px;margin-right:0.297px">( </span><span class="g"><span class="td" style="letter-spacing:-0.537px;margin-right:0.537px">0.00%</span></span><span class="td" style="letter-spacing:-0.203px;margin-right:0.203px"> )</span></div></div>
</div>
<div class="row" style="top:192px">
<div class="bc" style="left:16px"><div><span class="td" style="letter-spacing:0.189px;margin-right:-0.189px">Nuovi iscritti</span></div></div>
<div class="bc" style="left:145px"><div><span class="td" style="letter-spacing:0.0px;margin-right:0.078px">2</span><br><span class="td" style="letter-spacing:-0.297px;margin-right:0.297px">( </span><span class="rd"><span class="td" style="letter-spacing:-0.477px;margin-right:0.477px">-50.00%</span></span><span class="td" style="letter-spacing:-0.203px;margin-right:0.203px"> )</span></div></div>
<div class="bc" style="left:265px"><div><span class="td" style="letter-spacing:0.0px;margin-right:0.078px">4</span><br><span class="td" style="letter-spacing:-0.297px;margin-right:0.297px">( </span><span class="rd"><span class="td" style="letter-spacing:-0.477px;margin-right:0.477px">-20.00%</span></span><span class="td" style="letter-spacing:-0.203px;margin-right:0.203px"> )</span></div></div>
<div class="bc" style="left:385px"><div><span class="td" style="letter-spacing:0.0px;margin-right:0.078px">5</span><br><span class="td" style="letter-spacing:-0.297px;margin-right:0.297px">( </span><span class="g"><span class="td" style="letter-spacing:-0.329px;margin-right:0.329px">100.00%</span></span><span class="td" style="letter-spacing:-0.203px;margin-right:0.203px"> )</span></div></div>
<div class="bc" style="left:505px"><div><span class="td" style="letter-spacing:0.0px;margin-right:0.078px">0</span><br><span class="td" style="letter-spacing:-0.297px;margin-right:0.297px">( </span><span class="g"><span class="td" style="letter-spacing:-0.537px;margin-right:0.537px">0.00%</span></span><span class="td" style="letter-spacing:-0.203px;margin-right:0.203px"> )</span></div></div>
<div class="bc" style="left:625px"><div><span class="td" style="letter-spacing:0.0px;margin-right:0.078px">0</span><br><span class="td" style="letter-spacing:-0.297px;margin-right:0.297px">( </span><span class="g"><span class="td" style="letter-spacing:-0.537px;margin-right:0.537px">0.00%</span></span><span class="td" style="letter-spacing:-0.203px;margin-right:0.203px"> )</span></div></div>
<div class="bc" style="left:745px"><div><span class="td" style="letter-spacing:0.0px;margin-right:0.078px">0</span><br><span class="td" style="letter-spacing:-0.297px;margin-right:0.297px">( </span><span class="g"><span class="td" style="letter-spacing:-0.537px;margin-right:0.537px">0.00%</span></span><span class="td" style="letter-spacing:-0.203px;margin-right:0.203px"> )</span></div></div>
<div class="bc" style="left:865px"><div><span class="td" style="letter-spacing:0.0px;margin-right:0.078px">0</span><br><span class="td" style="letter-spacing:-0.297px;margin-right:0.297px">( </span><span class="g"><span class="td" style="letter-spacing:-0.537px;margin-right:0.537px">0.00%</span></span><span class="td" style="letter-spacing:-0.203px;margin-right:0.203px"> )</span></div></div>
<div class="bc" style="left:985px"><div><span class="td" style="letter-spacing:0.0px;margin-right:0.078px">0</span><br><span class="td" style="letter-spacing:-0.297px;margin-right:0.297px">( </span><span class="g"><span class="td" style="letter-spacing:-0.537px;margin-right:0.537px">0.00%</span></span><span class="td" style="letter-spacing:-0.203px;margin-right:0.203px"> )</span></div></div>
<div class="bc" style="left:1105px"><div><span class="td" style="letter-spacing:0.0px;margin-right:0.078px">0</span><br><span class="td" style="letter-spacing:-0.297px;margin-right:0.297px">( </span><span class="g"><span class="td" style="letter-spacing:-0.537px;margin-right:0.537px">0.00%</span></span><span class="td" style="letter-spacing:-0.203px;margin-right:0.203px"> )</span></div></div>
<div class="bc" style="left:1225px"><div><span class="td" style="letter-spacing:0.0px;margin-right:0.078px">0</span><br><span class="td" style="letter-spacing:-0.297px;margin-right:0.297px">( </span><span class="g"><span class="td" style="letter-spacing:-0.537px;margin-right:0.537px">0.00%</span></span><span class="td" style="letter-spacing:-0.203px;margin-right:0.203px"> )</span></div></div>
</div>
<div class="row" style="top:240px">
<div class="bc" style="left:16px"><div><span class="td" style="letter-spacing:0.014px;margin-right:-0.014px">Comunicazione</span></div></div>
<div class="bc" style="left:145px"><div><span class="td" style="letter-spacing:0.0px;margin-right:0.078px">8</span><br><span class="td" style="letter-spacing:-0.297px;margin-right:0.297px">( </span><span class="rd"><span class="td" style="letter-spacing:-0.477px;margin-right:0.477px">-68.00%</span></span><span class="td" style="letter-spacing:-0.203px;margin-right:0.203px"> )</span></div></div>
<div class="bc" style="left:265px"><div><span class="td" style="letter-spacing:0.172px;margin-right:-0.172px">25</span><br><span class="td" style="letter-spacing:-0.297px;margin-right:0.297px">( </span><span class="g"><span class="td" style="letter-spacing:-0.329px;margin-right:0.329px">212.50%</span></span><span class="td" style="letter-spacing:-0.203px;margin-right:0.203px"> )</span></div></div>
<div class="bc" style="left:385px"><div><span class="td" style="letter-spacing:0.0px;margin-right:0.078px">8</span><br><span class="td" style="letter-spacing:-0.297px;margin-right:0.297px">( </span><span class="g"><span class="td" style="letter-spacing:-0.329px;margin-right:0.329px">100.00%</span></span><span class="td" style="letter-spacing:-0.203px;margin-right:0.203px"> )</span></div></div>
<div class="bc" style="left:505px"><div><span class="td" style="letter-spacing:0.0px;margin-right:0.078px">0</span><br><span class="td" style="letter-spacing:-0.297px;margin-right:0.297px">( </span><span class="g"><span class="td" style="letter-spacing:-0.537px;margin-right:0.537px">0.00%</span></span><span class="td" style="letter-spacing:-0.203px;margin-right:0.203px"> )</span></div></div>
<div class="bc" style="left:625px"><div><span class="td" style="letter-spacing:0.0px;margin-right:0.078px">0</span><br><span class="td" style="letter-spacing:-0.297px;margin-right:0.297px">( </span><span class="g"><span class="td" style="letter-spacing:-0.537px;margin-right:0.537px">0.00%</span></span><span class="td" style="letter-spacing:-0.203px;margin-right:0.203px"> )</span></div></div>
<div class="bc" style="left:745px"><div><span class="td" style="letter-spacing:0.0px;margin-right:0.078px">0</span><br><span class="td" style="letter-spacing:-0.297px;margin-right:0.297px">( </span><span class="g"><span class="td" style="letter-spacing:-0.537px;margin-right:0.537px">0.00%</span></span><span class="td" style="letter-spacing:-0.203px;margin-right:0.203px"> )</span></div></div>
<div class="bc" style="left:865px"><div><span class="td" style="letter-spacing:0.0px;margin-right:0.078px">0</span><br><span class="td" style="letter-spacing:-0.297px;margin-right:0.297px">( </span><span class="g"><span class="td" style="letter-spacing:-0.537px;margin-right:0.537px">0.00%</span></span><span class="td" style="letter-spacing:-0.203px;margin-right:0.203px"> )</span></div></div>
<div class="bc" style="left:985px"><div><span class="td" style="letter-spacing:0.0px;margin-right:0.078px">0</span><br><span class="td" style="letter-spacing:-0.297px;margin-right:0.297px">( </span><span class="g"><span class="td" style="letter-spacing:-0.537px;margin-right:0.537px">0.00%</span></span><span class="td" style="letter-spacing:-0.203px;margin-right:0.203px"> )</span></div></div>
<div class="bc" style="left:1105px"><div><span class="td" style="letter-spacing:0.0px;margin-right:0.078px">0</span><br><span class="td" style="letter-spacing:-0.297px;margin-right:0.297px">( </span><span class="g"><span class="td" style="letter-spacing:-0.537px;margin-right:0.537px">0.00%</span></span><span class="td" style="letter-spacing:-0.203px;margin-right:0.203px"> )</span></div></div>
<div class="bc" style="left:1225px"><div><span class="td" style="letter-spacing:0.0px;margin-right:0.078px">0</span><br><span class="td" style="letter-spacing:-0.297px;margin-right:0.297px">( </span><span class="g"><span class="td" style="letter-spacing:-0.537px;margin-right:0.537px">0.00%</span></span><span class="td" style="letter-spacing:-0.203px;margin-right:0.203px"> )</span></div></div>
</div>
<div id="htrack"><div id="hscroll"></div></div>
</div>
</div>
</body></html>
